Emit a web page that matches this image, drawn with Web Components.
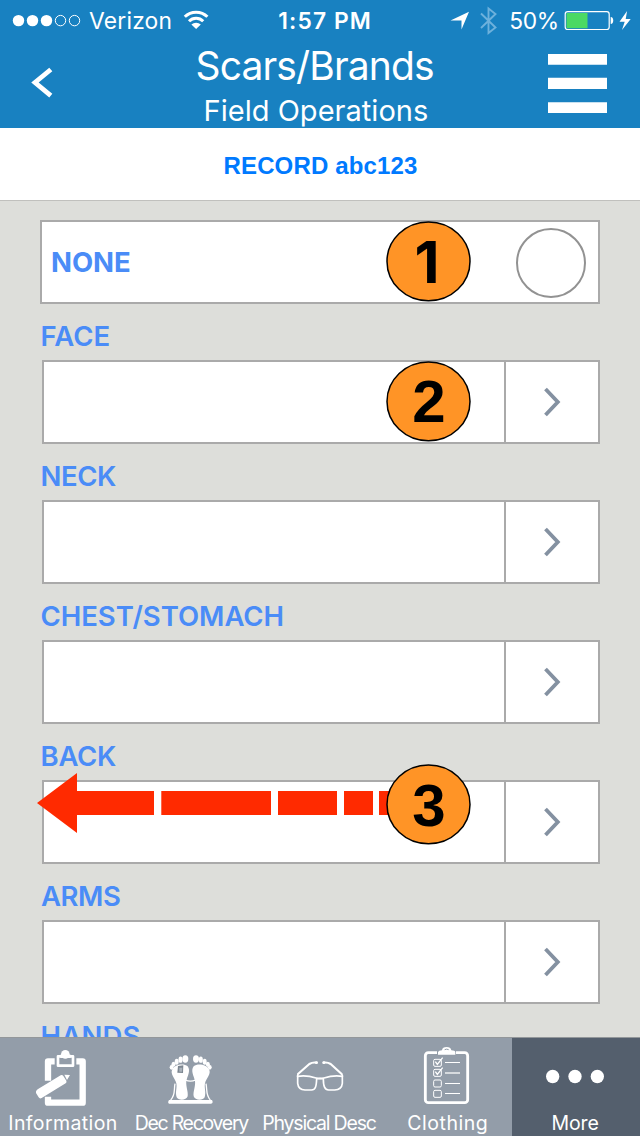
<!DOCTYPE html>
<html lang="en">
<head>
<meta charset="utf-8">
<title>Scars/Brands</title>
<style>
html,body{margin:0;padding:0}
body{width:640px;height:1136px;overflow:hidden;font-family:Inter,"Liberation Sans",sans-serif}
</style>
</head>
<body>
<app-screen>
  <status-bar slot="top"></status-bar>
  <nav-bar slot="top"><ink-text w="235.500" dx=".5" style="font-size:39px;--lh:49px;font-weight:400">Scars/Brands</ink-text><ink-text slot="sub" w="221.500" dx=".5" style="font-size:29px;--lh:41px;font-weight:400">Field Operations</ink-text></nav-bar>
  <record-bar slot="top"><ink-text w="192.500" dx=".5" style="font-family:'Liberation Sans',sans-serif;font-weight:bold;font-size:24px;--lh:74px">RECORD abc123</ink-text></record-bar>
  <check-row><ink-text w="78" style="font-size:27.500px;--lh:80px;font-weight:650">NONE</ink-text><step-marker slot="mark" class="one">1</step-marker></check-row>
  <field-row><ink-text slot="label" w="67" dx=".6">FACE</ink-text><step-marker slot="mark">2</step-marker></field-row>
  <field-row><ink-text slot="label" w="73.500" dx=".6">NECK</ink-text></field-row>
  <field-row><ink-text slot="label" w="241" dx="-.5">CHEST/STOMACH</ink-text></field-row>
  <field-row><ink-text slot="label" w="73.500" dx=".6">BACK</ink-text><swipe-arrow slot="mark"></swipe-arrow><step-marker slot="mark" class="low">3</step-marker></field-row>
  <field-row><ink-text slot="label" w="79" dx="-1">ARMS</ink-text></field-row>
  <field-row><ink-text slot="label" w="97" dx=".6">HANDS</ink-text></field-row>
  <tab-bar slot="bottom">
    <tab-item icon="info" style="--shift:-1px"><ink-text w="107.500">Information</ink-text></tab-item>
    <tab-item icon="feet" style="--shift:.5px"><ink-text w="113.500">Dec Recovery</ink-text></tab-item>
    <tab-item icon="glasses"><ink-text w="113.500">Physical Desc</ink-text></tab-item>
    <tab-item icon="list" style="--shift:-.5px"><ink-text w="78.500">Clothing</ink-text></tab-item>
    <tab-item icon="more" active style="--shift:-.5px"><ink-text w="46">More</ink-text></tab-item>
  </tab-bar>
</app-screen>
<script>
const define=(name,html,ready)=>customElements.define(name,class extends HTMLElement{
  connectedCallback(){
    if(this.shadowRoot)return;
    this.attachShadow({mode:'open'}).innerHTML=html;
    if(ready)ready.call(this,this.shadowRoot);
  }
});

define('app-screen',`<style>
:host{display:grid;grid-template-rows:200px 837px 99px;width:640px;height:1136px;background:#dddeda}
header{display:grid;grid-template-rows:41px 87px 72px}
main{border-top:1px solid #c0c0bd;box-sizing:border-box;overflow:hidden;padding:19px 40px 0}
</style><header><slot name="top"></slot></header><main><slot></slot></main><slot name="bottom"></slot>`);

define('status-bar',`<style>
:host{display:grid;grid-template-columns:89px 190px 231px 130px;background:#1881c1;color:#fff;height:41px}
div{display:flex;align-items:center}
svg{display:block;flex:none}
ink-text{--lh:41px;font-size:22.800px;flex:none}
</style>
<div><svg width="89" height="41" fill="#fff"><circle cx="18.500" cy="20.600" r="5.700"/><circle cx="32.500" cy="20.600" r="5.700"/><circle cx="46.500" cy="20.600" r="5.700"/><g fill="none" stroke="#fff"><circle cx="60.500" cy="20.600" r="5.200"/><circle cx="74.500" cy="20.600" r="5.200"/></g></svg></div>
<div><ink-text w="81.500">Verizon</ink-text><svg width="50" height="41" viewBox="171.500 0 50 41" fill="none" stroke="#fff" stroke-width="3"><path d="M185.300 16.800a16 16 0 0 1 22.600 0M189.500 21.300a10 10 0 0 1 14.200 0"/><path d="M191.900 24.600a6.600 6.600 0 0 1 9.400 0L196.600 29z" fill="#fff" stroke="none"/></svg></div>
<div><ink-text w="90.500" dx=".3" style="font-weight:600">1:57 PM</ink-text><svg width="140" height="41" viewBox="369.500 0 140 41"><path fill="#fff" d="M468.500 11.700L461 29.600V20.600H450z"/><path d="M480.500 13.500L495 27.500 488 33V8.500L495 14 480.500 28" fill="none" stroke="#6db1dc" stroke-width="1.900"/></svg></div>
<div><ink-text w="46.500" dx=".3">50%</ink-text><svg width="82" height="41" viewBox="556.500 0 82 41"><rect x="564.700" y="11.700" width="44" height="17.800" rx="2.500" fill="none" stroke="#fff" stroke-width="1.200"/><path d="M566 13h21v15.200h-21z" fill="#4bd964"/><path d="M610.200 17c3.400 0 3.400 7 0 7z" fill="#fff"/><path d="M626.600 11L619 21.800h5.200L621.500 30 630.200 19h-5z" fill="#fff"/></svg></div>`);

define('nav-bar',`<style>
:host{display:grid;grid-template-columns:197px 1fr 93px;height:87px;background:#1881c1;color:#fff}
.sub{margin-left:8px}
svg{display:block}
.title{display:grid;grid-template-rows:49px 38px}
</style><svg width="197" height="87" viewBox="0 41 197 87"><path d="M50.800 69.500L35 82.500 50.800 95.700" fill="none" stroke="#fff" stroke-width="4.800"/></svg>
<div class="title"><slot></slot><div class="sub"><slot name="sub"></slot></div></div>
<svg width="93" height="87" viewBox="547 41 93 87" fill="#fff"><path d="M548 54h59v10.700h-59zM548 77.700h59v11.300h-59zM548 102.200h59v10.700h-59z"/></svg>`);

define('record-bar',`<style>:host{display:block;height:72px;box-sizing:border-box;padding:1px 0 0 224px;background:#fff;color:#007aff}</style><slot></slot>`);

define('ink-text',`<style>:host{display:block;white-space:pre;line-height:var(--lh);overflow:visible}span{display:inline-block}</style><span><slot></slot></span>`,function(root){
  // Tracks the glyphs out so the inked run spans exactly the requested width.
  const fit=()=>{
    const cs=getComputedStyle(this),ctx=document.createElement('canvas').getContext('2d');
    ctx.font=cs.fontWeight+' '+cs.fontSize+' '+cs.fontFamily;
    const t=this.textContent,m=ctx.measureText(t),w=+this.getAttribute('w');
    const ink=m.actualBoundingBoxLeft+m.actualBoundingBoxRight;
    const s=root.querySelector('span');
    s.style.letterSpacing=(w-ink)/(t.length-1)+'px';
    s.style.marginLeft=m.actualBoundingBoxLeft+(+this.getAttribute('dx')||0)+'px';
    this.style.width=w+'px';
  };
  requestAnimationFrame(fit);
});

define('check-row',`<style>
:host{display:flex;position:relative;justify-content:space-between;align-items:center;height:84px;box-sizing:border-box;border:2px solid #aaa;background:#fff;color:#4a8cf7;padding:0 12px 0 10px}
i{width:70px;height:70px;box-sizing:border-box;border:2px solid #929292;border-radius:50%;margin-top:2px}
::slotted(step-marker){position:absolute;left:344px;top:-1px}
</style><slot></slot><i></i><slot name="mark"></slot>`);

define('field-row',`<style>
:host{display:grid;grid-template-rows:56px 84px;color:#4a8cf7;font-size:27.500px;font-weight:570;--lh:47px}
.label{padding:9px 0 0 2px;box-sizing:border-box}
.box{position:relative;margin-left:2px;display:grid;grid-template-columns:1fr 94px;box-sizing:border-box;border:2px solid #aaa;background:#fff}
.go{border-left:2px solid #aaa;display:flex;align-items:center;justify-content:center}
::slotted(step-marker){position:absolute;left:342px;top:-1px}
::slotted(step-marker.low){top:-18px}
::slotted(swipe-arrow){position:absolute;left:-8px;top:-10px}
</style><div class="label"><slot name="label"></slot></div><div class="box"><div></div><div class="go"><svg width="20" height="32" viewBox="542 386 20 32"><path d="M545.500 389L557.800 402 545.500 415" fill="none" stroke="#8491a1" stroke-width="3.800"/></svg></div><slot name="mark"></slot></div>`);

define('step-marker',`<style>
:host{display:grid;width:86px;height:82px;color:#000;font:bold 60px/82px "Liberation Sans",sans-serif;text-align:center}
:host(.one){font:750 58px/83px Inter,sans-serif}
:host(.one) span{padding-right:4px}
:host(.low){line-height:84px}
svg,span{grid-area:1/1}
</style><svg width="86" height="82"><ellipse cx="42.500" cy="40.400" rx="41.500" ry="39.400" fill="#ff9426" stroke="#000" stroke-width="1.500"/></svg><span><slot></slot></span>`);

define('swipe-arrow',`<style>:host{display:block}svg{display:block}</style>
<svg width="356" height="62" viewBox="36 772 356 62" fill="#ff2a00"><path d="M37 803L77 773v18h77v24H77v18zM161.300 791H271v24H161.300zM278 791h59v24h-59zM344 791h29v24h-29zM379 791h13v24h-13z"/></svg>`);

define('tab-bar',`<style>:host{display:grid;grid-template-columns:repeat(5,128px);height:99px;box-sizing:border-box;border-top:1px solid #93979a;background:#939da9;color:#fff}</style><slot></slot>`);

// Icon artwork shares a 384x204 box, three units per CSS pixel.
const foot='<path d="M517 148C523 134 551 128 563 139C573 153 562 169 559 183C557 200 565 214 563 229C559 242 535 242 530 232C525 215 532 204 529 190C526 175 509 163 517 148z"/><ellipse cx="556" cy="117" rx="9" ry="11"/><ellipse cx="541.500" cy="119" rx="6" ry="9.500"/><ellipse cx="530" cy="125" rx="6" ry="9"/><ellipse cx="520.500" cy="133" rx="6" ry="8"/><ellipse cx="514.500" cy="142" rx="5.500" ry="7"/>';
const icons={
info:['0 60',`<g fill="none" stroke="#fff" stroke-linejoin="round"><path d="M164 124H144V182M144 230V248H248V124H229" stroke-width="19"/><path d="M174 137V109H219V137Z" stroke-width="8"/></g><g fill="#fff"><circle cx="196" cy="103" r="13"/><path d="M181 104h31v10h-31z"/><path d="M113 208L182 166Q187 164 190 168L199 182Q201 187 197 190L125 234Q119 237 116 232L108 219Q106 213 113 208zM193 164L210 165 201 180z"/></g>`],
feet:['384 60',`<g fill="#fff">${foot}</g><g transform="matrix(-1 0 0 1 1144 0)" fill="#fff">${foot}</g><path d="M534 138l16-2-1 23-17-1z" fill="#7d8791"/><path d="M538 143h9l-1 12h-8z" fill="#aab2bb"/><path d="M556 180Q571 187 587 180M525 191C521 212 527 224 512 240M618 191C622 212 617 225 631 240" fill="none" stroke="#fff" stroke-width="4"/><path d="M507 240h129q5 9-3 11H507q-5-3 0-11z" fill="#fff"/>`],
glasses:['18 60',`<g fill="none" stroke="#fff" stroke-linejoin="round" stroke-linecap="round"><path d="M144 162L178 132Q188 126 199 128M275 162L242 132Q232 126 221 128" stroke-width="6.500"/><path d="M199 128h1M221 128h1" stroke-width="8"/><path d="M143 169Q170 165 198 174Q210 178 222 174Q250 165 277 169" stroke-width="5.500"/><path d="M143 165V190Q145 209 165 210H183C197 211 199 198 200 176Q210 174 220 176C220 198 224 211 237 210H254Q275 209 277 190V165" stroke-width="5"/></g>`],
list:['402 60',`<rect x="526" y="98" width="127" height="150" rx="9" fill="none" stroke="#fff" stroke-width="8.500"/><path d="M561 88h57v18h-57z" fill="#939da9"/><path d="M564 104V96Q566 92 576 91Q577 81 590 81Q602 81 604 91Q615 92 616 96V104z" fill="#fff"/><path d="M584 89q6-3 12 0" stroke="#939da9" stroke-width="3" fill="none"/><g fill="none" stroke="#fff" stroke-width="3"><rect x="551" y="118" width="23" height="21" rx="4"/><rect x="551" y="148" width="23" height="21" rx="4"/><rect x="551" y="180" width="23" height="21" rx="4"/><rect x="551" y="211" width="23" height="21" rx="4"/><path d="M585 127.500h45M585 190.500h45M585 220.500h45"/><path d="M556 125l6 8 16-20M556 155l6 8 16-20" stroke-width="4"/><path d="M585 159h45" stroke-width="5" opacity=".75"/></g>`],
more:['786 60',`<g fill="#fff"><circle cx="908" cy="169.500" r="20"/><circle cx="975" cy="169.500" r="20"/><circle cx="1042" cy="169.500" r="20"/></g>`]
};
define('tab-item',`<style>
:host{display:grid;grid-template-rows:70px 28px;justify-items:center;font-size:19.500px;--lh:30px;font-weight:400}
:host([active]){background:#545f6d}
svg{display:block;margin-top:2px}
.l{position:relative;left:var(--shift,0px);}
</style><svg width="128" height="68"></svg><div class="l"><slot></slot></div>`,function(root){
  const [o,art]=icons[this.getAttribute('icon')],s=root.querySelector('svg');
  s.setAttribute('viewBox',o+' 384 204');s.innerHTML=art;
});
</script>
</body>
</html>
